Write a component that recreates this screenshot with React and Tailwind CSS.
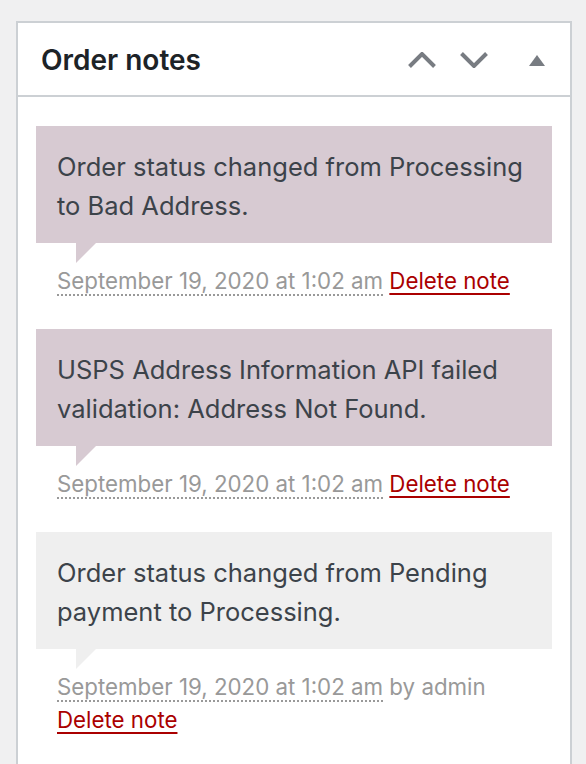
const notes = [
  {
    text: ['Order status changed from Processing', 'to Bad Address.'],
    tone: 'bg-[#d7cad2]',
    tip: 'border-t-[#d7cad2]',
    by: null,
  },
  {
    text: ['USPS Address Information API failed', 'validation: Address Not Found.'],
    tone: 'bg-[#d7cad2]',
    tip: 'border-t-[#d7cad2]',
    by: null,
  },
  {
    text: ['Order status changed from Pending', 'payment to Processing.'],
    tone: 'bg-[#efefef]',
    tip: 'border-t-[#efefef]',
    by: 'admin',
  },
];

const Chevron = ({ up }) => (
  <svg width="28" height="16" viewBox="0 0 28 16" fill="none" stroke="#787c82" strokeWidth="4">
    {up ? <path d="M1.5 14.5 L14 2 L26.5 14.5" /> : <path d="M1.5 1.5 L14 14 L26.5 1.5" />}
  </svg>
);

const Note = ({ note }) => (
  <li className="mb-[32px]">
    <div className={`${note.tone} px-[21px] pt-[21px] pb-[18px] text-[25.5px] leading-[39px] text-[#3c434a] whitespace-nowrap`}>
      {note.text.map((line, i) => (
        <div key={i}>{line}</div>
      ))}
    </div>
    <div className={`ml-[40px] w-0 h-0 border-t-[20px] border-r-[20px] border-r-transparent ${note.tip}`} />
    <p className="pl-[21px] mt-[1px] text-[22.3px] leading-[33px] text-[#999]">
      <abbr className="no-underline border-b-2 border-dotted border-[#999]">September 19, 2020 at 1:02 am</abbr>
      {note.by && <span> by {note.by}</span>}
      {note.by ? <br /> : ' '}
      <a href="#" className="text-[#a00] underline decoration-[2px] underline-offset-[4px]">Delete note</a>
    </p>
  </li>
);

export default function App() {
  return (
    <div className="h-[764px] overflow-hidden bg-[#f0f0f1] pt-[21px] pl-[16px] pr-[14px]" style={{ fontFamily: 'Inter, "Liberation Sans", sans-serif' }}>
      <div className="bg-white border-2 border-[#ccd0d4] min-h-[760px]">
        <div className="h-[74px] flex items-center border-b-2 border-[#ccd0d4] pl-[23px] pr-[25px]">
          <h2 className="flex-1 text-[28px] font-semibold text-[#1d2327] pt-[2px]">Order notes</h2>
          <div className="flex items-center pt-[2px]">
            <Chevron up />
            <div className="ml-[24px]"><Chevron /></div>
            <svg width="16" height="11" viewBox="0 0 16 11" className="ml-[41px]">
              <path d="M0 11 L8 0 L16 11 Z" fill="#787c82" />
            </svg>
          </div>
        </div>
        <ul className="px-[18px] pt-[29px]">
          {notes.map((n, i) => (
            <Note key={i} note={n} />
          ))}
        </ul>
      </div>
    </div>
  );
}
